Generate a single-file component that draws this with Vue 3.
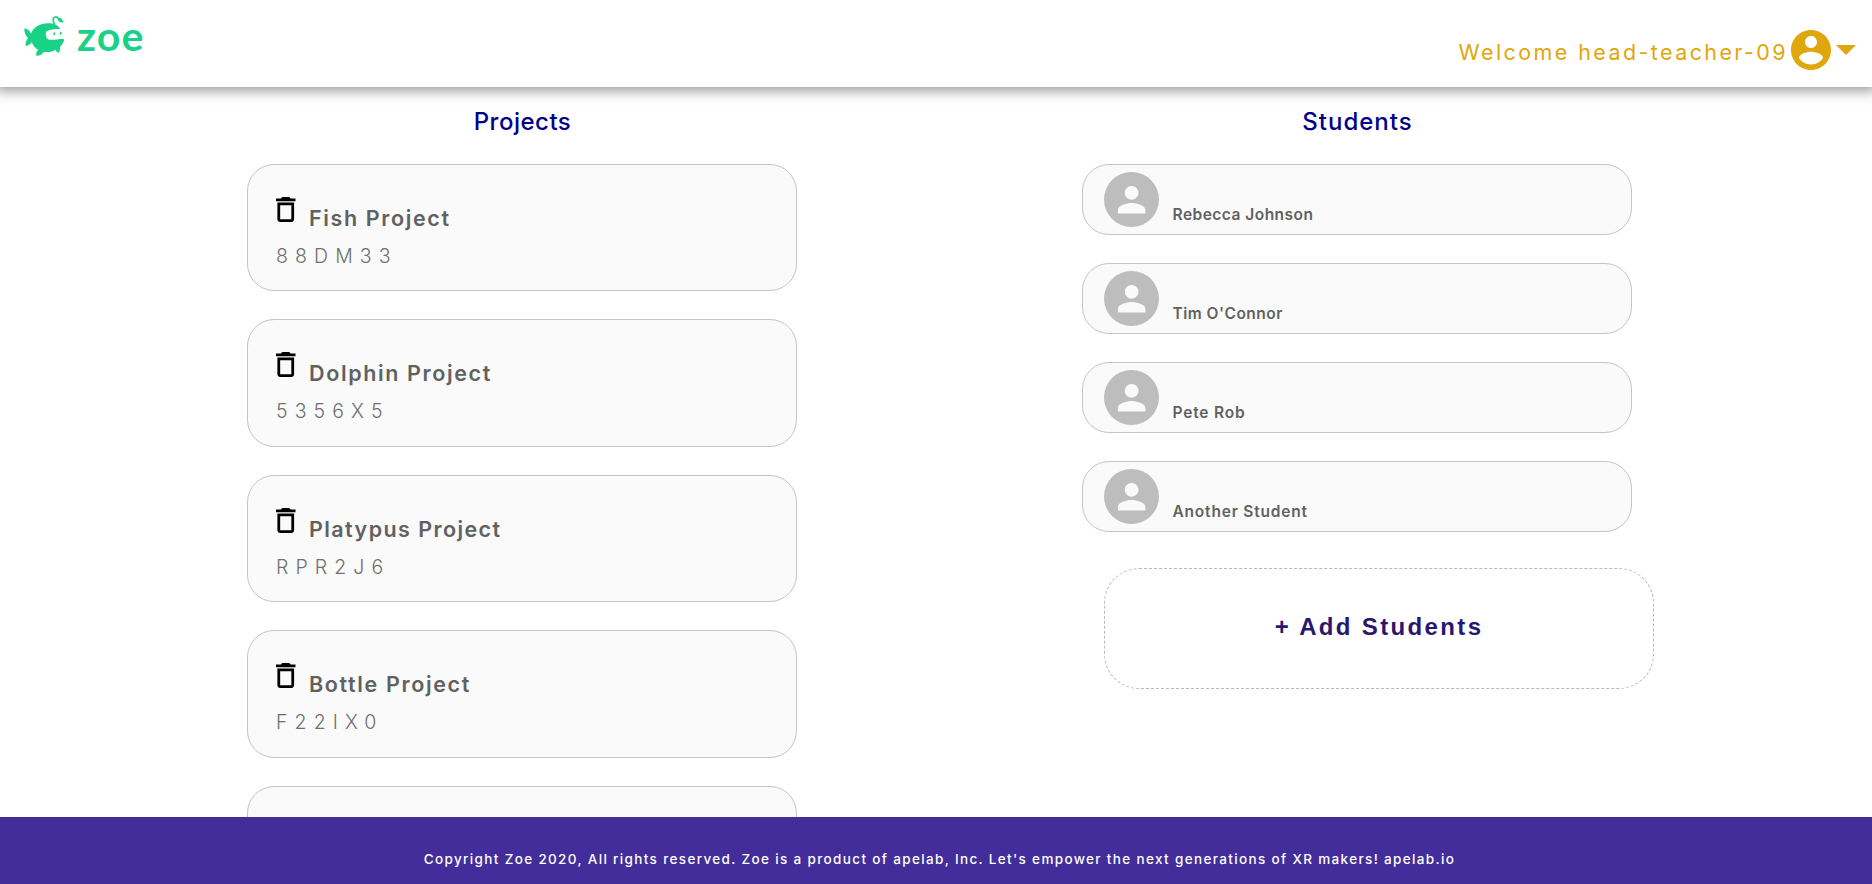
<script setup>
const projects = [
  { name: 'Fish Project', code: '88DM33' },
  { name: 'Dolphin Project', code: '5356X5' },
  { name: 'Platypus Project', code: 'RPR2J6' },
  { name: 'Bottle Project', code: 'F22IX0' },
  { name: '', code: '' }
]
const students = ['Rebecca Johnson', "Tim O'Connor", 'Pete Rob', 'Another Student']
</script>

<template>
  <div class="page">
    <header class="topbar">
      <div class="brand">
        <svg class="fish" viewBox="66 42 132 132">
          <path class="green" d="M73 86C80 84 89 91 93 101C99 84 118 70 145 70C161 70 173 75 181 87C165 87 149 88 140 94C136 99 137 110 142 116C150 123 168 117 190 117C194 118 192 124 189 128C186 134 182 138 180 142C181 149 179 155 176 158C172 157 169 154 167 149C157 156 144 157 131 155C127 163 119 168 109 167C107 160 110 154 115 150C106 145 99 137 95 127C90 134 84 138 77 137C75 130 79 121 84 115C77 106 72 96 73 86Z" />
          <path class="stem" d="M165 74C158 66 157 52 166 51C170 50 173 52 175 56" />
          <path class="green" d="M172 55C179 50 188 56 190 67C182 69 174 66 172 55Z" />
          <ellipse class="green" cx="163" cy="101" rx="3" ry="4.5" />
          <ellipse class="green" cx="182" cy="100" rx="3" ry="4.5" />
        </svg>
        <span class="wordmark">zoe</span>
      </div>
      <div class="account">
        <span class="welcome">Welcome head-teacher-09</span>
        <svg class="user" viewBox="2 2 20 20"><path d="M12 2C6.48 2 2 6.48 2 12s4.48 10 10 10 10-4.48 10-10S17.52 2 12 2zm0 3c1.66 0 3 1.34 3 3s-1.34 3-3 3-3-1.34-3-3 1.34-3 3-3zm0 14.2c-2.5 0-4.71-1.28-6-3.22.03-1.99 4-3.08 6-3.08 1.99 0 5.97 1.09 6 3.08-1.29 1.94-3.5 3.22-6 3.22z" /></svg>
        <svg class="caret" viewBox="7 10 10 5"><path d="M7 10l5 5 5-5z" /></svg>
      </div>
    </header>
    <main class="columns">
      <section class="column">
        <h2 class="heading">Projects</h2>
        <article v-for="(p, i) in projects" :key="i" class="card">
          <div class="title-row">
            <svg class="trash" viewBox="5 3 14 18" preserveAspectRatio="none"><path d="M6 19c0 1.1.9 2 2 2h8c1.1 0 2-.9 2-2V7H6v12zM8 9h8v10H8V9zm7.5-5l-1-1h-5l-1 1H5v2h14V4z" /></svg>
            <span class="title">{{ p.name }}</span>
          </div>
          <span class="code">{{ p.code }}</span>
        </article>
      </section>
      <section class="column">
        <h2 class="heading heading-wide">Students</h2>
        <article v-for="s in students" :key="s" class="student">
          <span class="avatar"><svg viewBox="0 0 24 24"><path d="M12 12c2.21 0 4-1.79 4-4s-1.79-4-4-4-4 1.79-4 4 1.79 4 4 4zm0 2c-2.67 0-8 1.34-8 4v2h16v-2c0-2.66-5.33-4-8-4z" /></svg></span>
          <span class="name">{{ s }}</span>
        </article>
        <button class="add">+ Add Students</button>
      </section>
    </main>
    <footer class="footer">Copyright Zoe 2020, All rights reserved. Zoe is a product of apelab, Inc. Let's empower the next generations of XR makers! apelab.io</footer>
  </div>
</template>

<style>
body { overflow: hidden; background: #fff; }
</style>

<style scoped>
.page { display: flex; flex-direction: column; height: 884px; overflow: hidden; font-family: Inter, "Liberation Sans", sans-serif; }
.topbar { display: flex; flex: none; box-sizing: border-box; height: 87px; justify-content: space-between; padding: 14px 16px 0 22px; background: #fff; box-shadow: 0 0 12px 4px rgba(0, 0, 0, .4); z-index: 1; }
.brand { display: flex; align-items: flex-start; gap: 11px; }
.fish { width: 44px; height: 44px; }
.green { fill: #18d285; }
.stem { fill: none; stroke: #18d285; stroke-width: 5; }
.wordmark { font: 700 41px/44px Lato, sans-serif; letter-spacing: 1.2px; color: #18d285; }
.account { display: flex; height: 71px; align-items: center; color: #dfa70c; }
.account svg { fill: #dfa70c; flex: none; }
.welcome { padding-top: 4px; font-size: 21.5px; line-height: 26px; letter-spacing: 2.4px; margin-right: 3px; }
.user { width: 40px; height: 40px; margin-right: 5px; }
.caret { width: 20px; height: 10px; }
.columns { display: flex; flex: 1; min-height: 0; overflow: hidden; gap: 285px; padding-left: 247px; }
.column { display: flex; flex: none; flex-direction: column; width: 550px; }
.heading { flex: none; margin: 0; height: 77px; padding: 20px 0 0 1px; box-sizing: border-box; text-align: center; font-size: 24px; font-weight: 500; line-height: 30px; letter-spacing: .5px; color: #00008b; }
.heading-wide { letter-spacing: 1px; }
.card { flex: none; box-sizing: border-box; height: 127.4px; margin-bottom: 28px; padding: 32px 28px 0; border: 1px solid #c4c4c4; border-radius: 27px; background: #fafafa; }
.title-row { display: flex; gap: 13.5px; height: 36px; }
.trash { width: 19.5px; height: 25px; }
.title { padding-top: 7px; font-size: 21.5px; font-weight: 600; line-height: 28px; letter-spacing: 1.63px; color: #616161; }
.card:nth-of-type(3) .title { letter-spacing: 1.42px; }
.code { display: block; margin-top: 10px; font-size: 19.5px; font-weight: 300; line-height: 26px; letter-spacing: 7.1px; color: #707070; }
.student { display: flex; flex: none; box-sizing: border-box; height: 71px; margin-bottom: 28px; padding: 7px 21px; gap: 13.5px; border: 1px solid #c4c4c4; border-radius: 27px; background: #fafafa; }
.avatar { display: flex; align-items: center; justify-content: center; width: 55px; height: 55px; border-radius: 50%; background: #bdbdbd; }
.avatar svg { width: 41.25px; fill: #fafafa; }
.name { padding-top: 33px; font-size: 15.5px; font-weight: 600; line-height: 20px; letter-spacing: .48px; color: #616161; }
.student:nth-of-type(n + 3) .name { letter-spacing: .8px; }
.add { flex: none; width: 550px; height: 121px; margin: 7.5px 0 0 22px; padding: 0 0 3px; border: 1px dashed #b8b8b8; border-radius: 35px; background: #fff; font: 700 24px/30px "Liberation Sans", sans-serif; letter-spacing: 2.35px; color: #29166f; }
.footer { display: flex; flex: none; box-sizing: border-box; height: 67px; justify-content: center; padding: 32px 0 0 7px; background: #422d9b; color: #fff; font-size: 13.5px; font-weight: 500; line-height: 20px; letter-spacing: 1.35px; z-index: 1; }
</style>
